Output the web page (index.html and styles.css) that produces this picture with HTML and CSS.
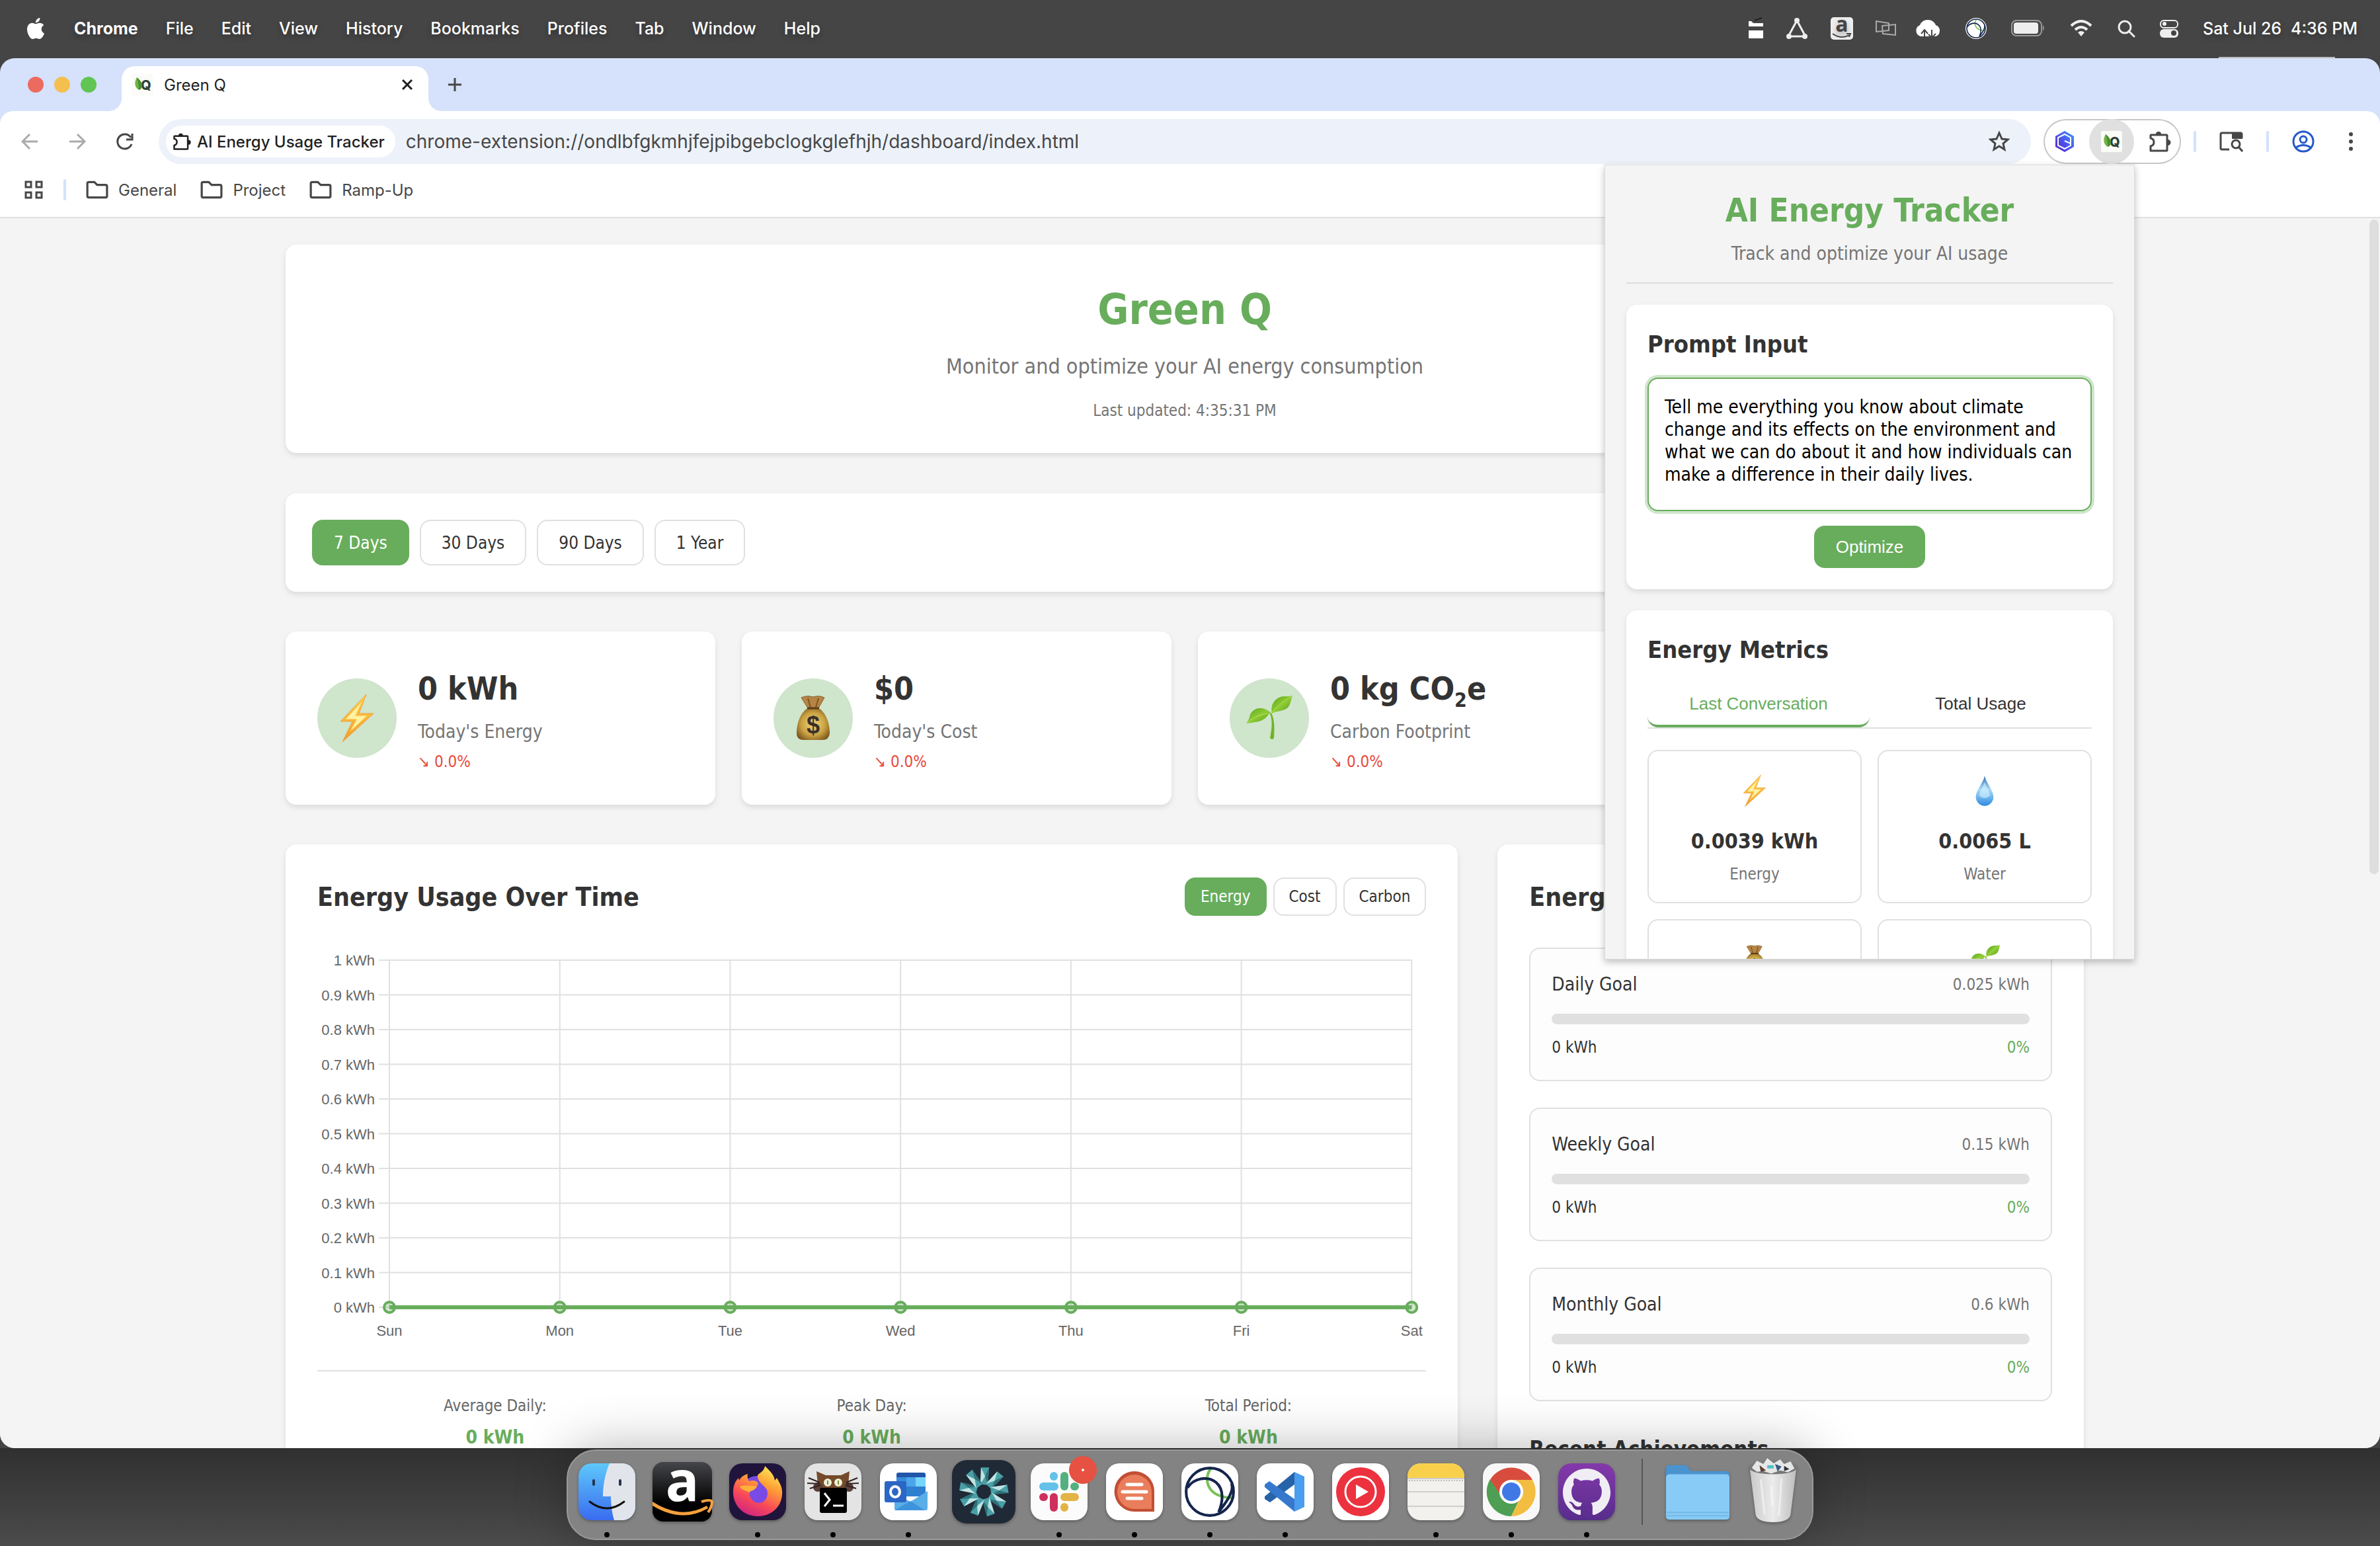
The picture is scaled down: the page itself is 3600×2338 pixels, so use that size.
FILE: index.html
```html
<!DOCTYPE html>
<html lang="en">
  <head>
    <meta charset="UTF-8" />
    <meta name="viewport" content="width=device-width, initial-scale=1.0" />
    <title>Green Q</title>
    <link rel="stylesheet" href="styles.css">
  </head>
  <body>
    <!-- Shared icons -->
    <svg class="defs" aria-hidden="true">
      <defs>
        <linearGradient id="boltFill" x1="0" y1="0" x2="0" y2="1">
          <stop offset="0" stop-color="#ffd34d" />
          <stop offset="1" stop-color="#f39a2c" />
        </linearGradient>
        <radialGradient id="bagFill" cx=".5" cy=".5" r=".6">
          <stop offset="0" stop-color="#f0d878" />
          <stop offset=".6" stop-color="#c9a243" />
          <stop offset="1" stop-color="#7d551c" />
        </radialGradient>
        <linearGradient id="leafFill" x1="0" y1="0" x2="1" y2="1">
          <stop offset="0" stop-color="#55a51c" />
          <stop offset=".5" stop-color="#8fcb35" />
          <stop offset="1" stop-color="#4d9a1a" />
        </linearGradient>
        <linearGradient id="dropFill" x1="0" y1="0" x2="0" y2="1">
          <stop offset="0" stop-color="#2f6fb5" />
          <stop offset=".45" stop-color="#a9dcf8" />
          <stop offset="1" stop-color="#2f8be0" />
        </linearGradient>
        <symbol id="bolt" viewBox="0 0 72 72">
          <path d="M50 0 L11 41 L29 41 L14 72 L61 29 L39 29 Z" fill="url(#boltFill)" stroke="#f0a23c" />
          <path d="M45 9 L18 38 L35 38 L25 57 L52 32 L34 32 Z" fill="#fff2a0" stroke="#fbb93a" />
        </symbol>
        <symbol id="bag" viewBox="0 0 72 72">
          <path d="M18 5 Q27 1 36 4 Q45 1 53 5 L44 21 L28 21 Z" fill="#b58545" stroke="#8a6130" />
          <path d="M28 6 L32 20 M44 6 L40 20" stroke="#805422" stroke-width="2" fill="none" />
          <path d="M28 21 H44 C54 26 61 42 61 59 Q60 69 50 69 H22 Q11 69 11 59 C11 42 18 26 28 21 Z" fill="url(#bagFill)" />
          <path d="M27 21 H45" stroke="#5e3d17" stroke-width="3" />
          <text x="36" y="59" text-anchor="middle" font-family="Liberation Sans" font-size="36" font-weight="700" fill="#3a302b">$</text>
        </symbol>
        <symbol id="sprout" viewBox="0 0 72 72">
          <path d="M39 28 C44 38 44 52 43 66 Q40 70 37 66 C40 52 41 40 37 29 Z" fill="#6db526" />
          <path d="M39 29 C27 16 9 20 6 34 C5 39 3 41 1 44 C14 42 24 42 31 35 C34 31 36 29 39 29 Z" fill="url(#leafFill)" />
          <path d="M40 29 C37 14 46 4 58 3 C64 3 68 3 71 2 C68 9 69 15 63 21 C56 26 45 25 40 29 Z" fill="url(#leafFill)" />
          <path d="M2 43 C14 34 22 29 38 29 M41 27 C48 18 57 10 70 3" stroke="#b7e05f" fill="none" />
        </symbol>
        <symbol id="drop" viewBox="0 0 72 72">
          <path d="M36 2 C33 18 16 34 16 50 A20 20 0 0 0 56 50 C56 34 39 18 36 2 Z" fill="url(#dropFill)" />
          <path d="M36 15 C33 28 24 38 24 47 Q36 58 48 47 C48 38 39 28 36 15 Z" fill="#d8f3ff" opacity=".6" />
        </symbol>
        <symbol id="folder" viewBox="0 0 32 26">
          <path d="M2 4 Q2 2 4 2 H12 L16 6 H28 Q30 6 30 8 V22 Q30 24 28 24 H4 Q2 24 2 22 Z" fill="none" stroke="#474747" stroke-width="3" />
        </symbol>
        <symbol id="puzzle" viewBox="0 0 34 34">
          <path d="M4 7 H27 Q28 7 28 8 V30 Q28 31 27 31 H3 V24 Q8 23 8 18 Q8 13 3 12 V8 Q3 7 4 7 Z" fill="none" stroke="currentColor" stroke-width="3" stroke-linejoin="round" />
          <path d="M11 6 A4 4 0 0 1 19 6 Z M29 14 A4 4 0 0 1 29 23 Z" fill="currentColor" />
        </symbol>
        <symbol id="greenq" viewBox="0 0 32 32">
          <rect width="32" height="32" rx="3" fill="#fbfcf8" />
          <text x="13" y="24" font-family="Inter" font-size="20" font-weight="800" fill="#2d4038">Q</text>
          <path d="M7 5 C3 12 3 20 10 24 C17 22 17 13 7 5 Z" fill="#6fb344" />
          <path d="M7 5 C9 12 10 18 10 24 C17 22 17 13 7 5 Z" fill="#4a9030" />
        </symbol>
        <symbol id="arc" viewBox="0 0 80 80">
          <path d="M42 5 C30 20 34 48 74 49" fill="none" stroke="#7ac259" stroke-width="4" />
          <circle cx="40" cy="40" r="35" fill="none" stroke="#14254d" stroke-width="4" />
          <path d="M7 34 C16 20 36 16 49 26 C62 37 59 56 53 70 C67 52 76 38 72 28" fill="none" stroke="#14254d" stroke-width="4" />
        </symbol>
      </defs>
    </svg>

    <header class="menubar">
      <nav class="menus">
        <svg class="apple" viewBox="0 0 24 24"><path fill="#fff" d="M12.152 6.896c-.948 0-2.415-1.078-3.96-1.040-2.040.027-3.910 1.183-4.961 3.014-2.117 3.675-.546 9.103 1.519 12.090 1.013 1.454 2.208 3.090 3.792 3.039 1.520-.065 2.090-.987 3.935-.987 1.831 0 2.350.987 3.960.948 1.637-.026 2.676-1.480 3.676-2.948 1.156-1.688 1.636-3.325 1.662-3.415-.039-.013-3.182-1.221-3.220-4.857-.026-3.040 2.480-4.494 2.597-4.559-1.429-2.090-3.623-2.324-4.390-2.376-2-.156-3.675 1.090-4.610 1.090zM15.530 3.830c.843-1.012 1.400-2.427 1.245-3.830-1.207.052-2.662.805-3.532 1.818-.780.896-1.454 2.338-1.273 3.714 1.338.104 2.715-.688 3.559-1.701" /></svg>
        <span class="app-name">Chrome</span>
        <span>File</span>
        <span>Edit</span>
        <span>View</span>
        <span>History</span>
        <span>Bookmarks</span>
        <span>Profiles</span>
        <span>Tab</span>
        <span>Window</span>
        <span>Help</span>
      </nav>
      <div class="status">
        <div class="status-apps">
          <svg width="22" height="34" viewBox="0 0 22 34"><path d="M0 6 H4 L7 9 H22 V14 H0 Z M0 20 H22 V32 H0 Z" fill="#fff" /><path d="M9 5 L20 1" stroke="#222" stroke-width="2" /></svg>
          <svg width="34" height="34" viewBox="0 0 34 34"><path d="M17 5 L4 29 H30 Z" fill="none" stroke="#eee" stroke-width="3" /><circle cx="17" cy="5" r="4" fill="#eee" /><circle cx="5" cy="29" r="4" fill="#eee" /><circle cx="29" cy="29" r="4" fill="#eee" /></svg>
          <svg width="34" height="34" viewBox="0 0 34 34"><rect width="34" height="34" rx="5" fill="#eee" /><text x="17" y="22" text-anchor="middle" font-family="Open Sans" font-size="32" font-weight="700" fill="#444">a</text><path d="M3 25 Q16 34 28 27 M24 25 H30 L28 30" stroke="#444" stroke-width="2" fill="none" /></svg>
          <svg width="31" height="24" viewBox="0 0 31 24"><path d="M1 1 L20 4 V15 L1 17 Z M10 8 L30 6 V22 L11 20 Z" fill="none" stroke="#aaa" stroke-width="2" /></svg>
        </div>
        <svg width="40" height="32" viewBox="0 0 40 32"><path d="M9 28 A9 9 0 0 1 8 11 A13 13 0 0 1 32 11 A9 9 0 0 1 32 28 Z" fill="#fff" /><path d="M15 31 V19 M10 24 L15 18 L20 24 M26 18 V31 M21 25 L26 30 L32 24" stroke="#444" stroke-width="2" fill="none" /></svg>
        <svg width="32" height="32" viewBox="0 0 80 80"><circle cx="40" cy="40" r="40" fill="#fff" /><use href="#arc" width="80" height="80" /></svg>
        <svg width="52" height="26" viewBox="0 0 52 26"><rect x="1" y="1" width="45" height="23" rx="7" fill="none" stroke="#999" stroke-width="2" /><rect x="4" y="4" width="37" height="17" rx="4" fill="#eee" /><path d="M48 8 Q52 12 48 17 Z" fill="#999" /></svg>
        <svg width="34" height="26" viewBox="0 0 34 26"><path d="M2 9 Q17 -5 32 9 M8 15 Q17 7 26 15" fill="none" stroke="#eee" stroke-width="4" /><path d="M17 25 L12 19 Q17 15 22 19 Z" fill="#eee" /></svg>
        <svg width="28" height="28" viewBox="0 0 28 28"><circle cx="12" cy="12" r="9" fill="none" stroke="#eee" stroke-width="3" /><path d="M18 18 L26 26" stroke="#eee" stroke-width="3" stroke-linecap="round" /></svg>
        <svg width="28" height="28" viewBox="0 0 28 28"><rect x="1" y="2" width="26" height="11" rx="5" fill="none" stroke="#eee" stroke-width="2" /><circle cx="7" cy="7" r="3" fill="#eee" /><rect x="0" y="15" width="28" height="13" rx="6" fill="#eee" /><circle cx="21" cy="21" r="4" fill="#444" /></svg>
        <span class="clock"><span>Sat Jul 26</span><span>4:36 PM</span></span>
      </div>
    </header>

    <main class="window">
      <div class="tabstrip">
        <div class="lights"><i class="red"></i><i class="yellow"></i><i class="green"></i></div>
        <div class="tab">
          <svg width="32" height="32"><use href="#greenq" /></svg>
          <span>Green Q</span>
          <button class="icon-button tab-close" aria-label="Close tab"><svg width="16" height="16" viewBox="0 0 16 16"><path d="M1 1 L15 15 M15 1 L1 15" stroke="#1f1f1f" stroke-width="3" /></svg></button>
        </div>
        <button class="icon-button" aria-label="New tab"><svg width="20" height="20" viewBox="0 0 20 20"><path d="M10 0 V20 M0 10 H20" stroke="#474747" stroke-width="3" /></svg></button>
      </div>

      <div class="toolbar">
        <div class="nav-buttons">
          <button class="icon-button" aria-label="Back"><svg width="26" height="26" viewBox="0 0 26 26"><path d="M25 13 H3 M13 2 L2 13 L13 24" fill="none" stroke="#aaa" stroke-width="3" /></svg></button>
          <button class="icon-button" aria-label="Forward"><svg width="26" height="26" viewBox="0 0 26 26"><path d="M1 13 H23 M13 2 L24 13 L13 24" fill="none" stroke="#aaa" stroke-width="3" /></svg></button>
          <button class="icon-button" aria-label="Reload"><svg width="26" height="26" viewBox="0 0 26 26"><path d="M22 7 A11 11 0 1 0 23 17" fill="none" stroke="#474747" stroke-width="3" /><path d="M24 1 V10 H15" fill="none" stroke="#474747" stroke-width="3" /></svg></button>
        </div>
        <div class="omnibox">
          <span class="chip"><svg width="28" height="28"><use href="#puzzle" /></svg>AI Energy Usage Tracker</span>
          <input class="url" type="text" aria-label="Address" value="chrome-extension://ondlbfgkmhjfejpibgebclogkglefhjh/dashboard/index.html" />
          <svg width="32" height="32" viewBox="0 0 32 32"><path d="M16 3 L20 12 L29 13 L22 19 L24 28 L16 23 L8 28 L10 19 L3 13 L12 12 Z" fill="none" stroke="#474747" stroke-width="3" /></svg>
        </div>
        <div class="extensions">
          <svg width="30" height="34" viewBox="0 0 30 34">
            <defs><linearGradient id="hex" x1="1" y1="0" x2="0" y2="1"><stop offset="0" stop-color="#3a9df5" /><stop offset=".5" stop-color="#4b57f2" /><stop offset="1" stop-color="#5b1fc0" /></linearGradient></defs>
            <path d="M15 1 L29 9 V25 L15 33 L1 25 V9 Z" fill="url(#hex)" />
            <path d="M24 20 V23 L15 28 L5 23 V11 L15 6 L24 11 V20 L15 16" fill="none" stroke="#fff" stroke-width="2" />
          </svg>
          <span class="ext-active"><svg width="32" height="32"><use href="#greenq" /></svg></span>
          <svg width="34" height="34"><use href="#puzzle" /></svg>
        </div>
        <div class="right-tools">
          <i class="divider"></i>
          <svg width="36" height="32" viewBox="0 0 36 32"><path d="M15 28 H4 Q2 28 2 26 V5 Q2 3 4 3 H32 Q34 3 34 5 V11" fill="none" stroke="#474747" stroke-width="3" /><path d="M19 3 H35 V12 H19 Z" fill="#474747" /><circle cx="25" cy="20" r="6" fill="none" stroke="#474747" stroke-width="3" /><path d="M29 24 L35 31" stroke="#474747" stroke-width="3" /></svg>
          <i class="divider"></i>
          <svg width="34" height="34" viewBox="0 0 34 34"><circle cx="17" cy="17" r="15" fill="none" stroke="#2558c9" stroke-width="3" /><circle cx="17" cy="14" r="5" fill="none" stroke="#2558c9" stroke-width="3" /><path d="M6 26 Q17 19 28 26" fill="none" stroke="#2558c9" stroke-width="3" /></svg>
          <svg class="kebab" width="8" height="30" viewBox="0 0 8 30"><circle cx="4" cy="4" r="3" fill="#474747" /><circle cx="4" cy="15" r="3" fill="#474747" /><circle cx="4" cy="26" r="3" fill="#474747" /></svg>
        </div>
      </div>

      <div class="bookmarks">
        <svg width="30" height="30" viewBox="0 0 30 30"><path d="M3 3 H11 V11 H3 Z M19 3 H27 V11 H19 Z M3 19 H11 V27 H3 Z M19 19 H27 V27 H19 Z" fill="none" stroke="#474747" stroke-width="3" /></svg>
        <i class="divider"></i>
        <a href="#general"><svg width="34" height="28"><use href="#folder" /></svg>General</a>
        <a href="#project"><svg width="34" height="28"><use href="#folder" /></svg>Project</a>
        <a href="#ramp-up"><svg width="34" height="28"><use href="#folder" /></svg>Ramp-Up</a>
      </div>

      <div class="viewport">
        <div class="dashboard">
          <section class="card page-header">
            <h1>Green Q</h1>
            <p class="subtitle">Monitor and optimize your AI energy consumption</p>
            <p class="last-updated">Last updated: 4:35:31 PM</p>
          </section>

          <section class="card filters">
            <button class="btn active">7 Days</button>
            <button class="btn">30 Days</button>
            <button class="btn">90 Days</button>
            <button class="btn">1 Year</button>
          </section>

          <section class="summary">
            <div class="card summary-card">
              <span class="summary-icon"><svg><use href="#bolt" /></svg></span>
              <div class="summary-info">
                <h3>0 kWh</h3>
                <p>Today's Energy</p>
                <span class="trend">↘ 0.0%</span>
              </div>
            </div>
            <div class="card summary-card">
              <span class="summary-icon"><svg><use href="#bag" /></svg></span>
              <div class="summary-info">
                <h3>$0</h3>
                <p>Today's Cost</p>
                <span class="trend">↘ 0.0%</span>
              </div>
            </div>
            <div class="card summary-card">
              <span class="summary-icon"><svg><use href="#sprout" /></svg></span>
              <div class="summary-info">
                <h3>0 kg CO<sub>2</sub>e</h3>
                <p>Carbon Footprint</p>
                <span class="trend">↘ 0.0%</span>
              </div>
            </div>
            <div class="card summary-card"></div>
          </section>

          <section class="columns">
            <div class="card chart-card">
              <div class="card-head">
                <h2>Energy Usage Over Time</h2>
                <div class="chart-controls">
                  <button class="btn small active">Energy</button>
                  <button class="btn small">Cost</button>
                  <button class="btn small">Carbon</button>
                </div>
              </div>

              <div class="chart">
                <svg class="plot">
                  <g class="grid-lines">
                    <line x1="0" x2="0" y1="0" y2="100%" />
                    <line x1="16.667%" x2="16.667%" y1="0" y2="100%" />
                    <line x1="33.333%" x2="33.333%" y1="0" y2="100%" />
                    <line x1="50%" x2="50%" y1="0" y2="100%" />
                    <line x1="66.667%" x2="66.667%" y1="0" y2="100%" />
                    <line x1="83.333%" x2="83.333%" y1="0" y2="100%" />
                    <line x1="100%" x2="100%" y1="0" y2="100%" />
                    <line x1="-16" x2="100%" y1="0" y2="0" />
                    <line x1="-16" x2="100%" y1="10%" y2="10%" />
                    <line x1="-16" x2="100%" y1="20%" y2="20%" />
                    <line x1="-16" x2="100%" y1="30%" y2="30%" />
                    <line x1="-16" x2="100%" y1="40%" y2="40%" />
                    <line x1="-16" x2="100%" y1="50%" y2="50%" />
                    <line x1="-16" x2="100%" y1="60%" y2="60%" />
                    <line x1="-16" x2="100%" y1="70%" y2="70%" />
                    <line x1="-16" x2="100%" y1="80%" y2="80%" />
                    <line x1="-16" x2="100%" y1="90%" y2="90%" />
                    <line x1="-16" x2="100%" y1="100%" y2="100%" />
                  </g>
                  <g class="y-labels">
                    <text x="-22" y="0" dy="8">1 kWh</text>
                    <text x="-22" y="10%" dy="8">0.9 kWh</text>
                    <text x="-22" y="20%" dy="8">0.8 kWh</text>
                    <text x="-22" y="30%" dy="8">0.7 kWh</text>
                    <text x="-22" y="40%" dy="8">0.6 kWh</text>
                    <text x="-22" y="50%" dy="8">0.5 kWh</text>
                    <text x="-22" y="60%" dy="8">0.4 kWh</text>
                    <text x="-22" y="70%" dy="8">0.3 kWh</text>
                    <text x="-22" y="80%" dy="8">0.2 kWh</text>
                    <text x="-22" y="90%" dy="8">0.1 kWh</text>
                    <text x="-22" y="100%" dy="8">0 kWh</text>
                  </g>
                  <g class="x-labels">
                    <text x="0" y="100%" dy="43">Sun</text>
                    <text x="16.667%" y="100%" dy="43">Mon</text>
                    <text x="33.333%" y="100%" dy="43">Tue</text>
                    <text x="50%" y="100%" dy="43">Wed</text>
                    <text x="66.667%" y="100%" dy="43">Thu</text>
                    <text x="83.333%" y="100%" dy="43">Fri</text>
                    <text x="100%" y="100%" dy="43">Sat</text>
                  </g>
                  <g class="series">
                    <line x1="0" x2="100%" y1="100%" y2="100%" />
                    <circle cx="0" cy="100%" r="8" />
                    <circle cx="16.667%" cy="100%" r="8" />
                    <circle cx="33.333%" cy="100%" r="8" />
                    <circle cx="50%" cy="100%" r="8" />
                    <circle cx="66.667%" cy="100%" r="8" />
                    <circle cx="83.333%" cy="100%" r="8" />
                    <circle cx="100%" cy="100%" r="8" />
                  </g>
                </svg>
              </div>

              <div class="chart-stats">
                <div><span>Average Daily:</span><strong>0 kWh</strong></div>
                <div><span>Peak Day:</span><strong>0 kWh</strong></div>
                <div><span>Total Period:</span><strong>0 kWh</strong></div>
              </div>
            </div>

            <div class="card goals-card">
              <div class="card-head"><h2>Energy Goals</h2></div>
              <div class="goals">
                <div class="goal">
                  <div class="goal-row"><span class="goal-name">Daily Goal</span><span class="goal-target">0.025 kWh</span></div>
                  <div class="progress"></div>
                  <div class="goal-row result"><span>0 kWh</span><span class="percent">0%</span></div>
                </div>
                <div class="goal">
                  <div class="goal-row"><span class="goal-name">Weekly Goal</span><span class="goal-target">0.15 kWh</span></div>
                  <div class="progress"></div>
                  <div class="goal-row result"><span>0 kWh</span><span class="percent">0%</span></div>
                </div>
                <div class="goal">
                  <div class="goal-row"><span class="goal-name">Monthly Goal</span><span class="goal-target">0.6 kWh</span></div>
                  <div class="progress"></div>
                  <div class="goal-row result"><span>0 kWh</span><span class="percent">0%</span></div>
                </div>
              </div>
              <h3 class="achievements">Recent Achievements</h3>
            </div>
          </section>
        </div>
        <div class="scrollbar"><div class="thumb"></div></div>
      </div>

      <!-- Extension popup -->
      <aside class="popup">
        <div class="popup-header">
          <h1>AI Energy Tracker</h1>
          <p>Track and optimize your AI usage</p>
        </div>
        <section class="card popup-card">
          <h2><label for="prompt">Prompt Input</label></h2>
          <textarea id="prompt">Tell me everything you know about climate change and its effects on the environment and what we can do about it and how individuals can make a difference in their daily lives.</textarea>
          <button class="optimize">Optimize</button>
        </section>
        <section class="card popup-card">
          <h2>Energy Metrics</h2>
          <div class="tabs">
            <button class="active">Last Conversation</button>
            <button>Total Usage</button>
          </div>
          <div class="metrics">
            <div class="metric"><svg><use href="#bolt" /></svg><strong>0.0039 kWh</strong><span>Energy</span></div>
            <div class="metric"><svg><use href="#drop" /></svg><strong>0.0065 L</strong><span>Water</span></div>
            <div class="metric"><svg><use href="#bag" /></svg></div>
            <div class="metric"><svg><use href="#sprout" /></svg></div>
          </div>
        </section>
      </aside>
    </main>

    <footer class="dock-area">
      <div class="dock">
        <div class="dock-item running">
          <svg viewBox="0 0 86 86">
            <defs>
              <linearGradient id="finder" x1="0" y1="0" x2="0" y2="1"><stop offset="0" stop-color="#5ec8fa" /><stop offset="1" stop-color="#3a6cf0" /></linearGradient>
              <clipPath id="tile"><rect width="86" height="86" rx="20" /></clipPath>
            </defs>
            <g clip-path="url(#tile)">
              <rect width="86" height="86" fill="url(#finder)" />
              <path d="M47 0 C40 16 37 34 37 50 H49 C49 64 51 76 54 86 H86 V0 Z" fill="#e1e5eb" />
            </g>
            <path d="M23 26 V32 M63 26 V32" stroke="#24354d" stroke-width="4" stroke-linecap="round" />
            <path d="M17 58 Q43 78 69 58" fill="none" stroke="#111" stroke-width="3" stroke-linecap="round" />
          </svg>
        </div>
        <div class="dock-item">
          <svg class="large" viewBox="0 0 90 90">
            <defs><linearGradient id="black" x1="0" y1="0" x2="0" y2="1"><stop offset="0" stop-color="#45464a" /><stop offset=".7" stop-color="#000" /></linearGradient></defs>
            <rect width="90" height="90" rx="16" fill="url(#black)" />
            <text x="45" y="59" text-anchor="middle" font-family="Open Sans" font-size="84" font-weight="700" fill="#fff">a</text>
            <path d="M0 60 Q44 88 82 66 L84 70 Q44 93 0 66 Z" fill="#f7a13c" />
            <path d="M74 60 Q88 56 90 60 Q90 68 84 76" fill="none" stroke="#f7a13c" stroke-width="4" />
          </svg>
        </div>
        <div class="dock-item running">
          <svg viewBox="0 0 86 86">
            <defs>
              <linearGradient id="fox" x1=".8" y1="0" x2=".3" y2="1"><stop offset="0" stop-color="#fff05a" /><stop offset=".35" stop-color="#ffa035" /><stop offset=".7" stop-color="#f8485a" /><stop offset="1" stop-color="#cf2482" /></linearGradient>
            </defs>
            <rect width="86" height="86" rx="20" fill="#20143c" />
            <circle cx="42" cy="44" r="25" fill="#7a4ae6" />
            <path d="M54 4 C64 14 68 18 69 26 L72 22 C78 32 81 38 80 48 C78 68 62 80 43 80 C22 80 6 64 6 44 C6 34 9 27 14 22 L15 26 C18 20 22 18 28 16 C27 20 28 24 30 27 C37 25 41 26 44 30 L42 35 L35 40 C27 40 30 58 44 60 C56 60 60 48 57 40 C52 32 42 28 43 18 C46 14 53 12 54 4 Z" fill="url(#fox)" />
            <path d="M16 35 C22 32 32 34 42 35 C38 42 34 40 30 44 C26 40 19 42 16 35 Z" fill="#ffb038" />
          </svg>
        </div>
        <div class="dock-item running">
          <svg viewBox="0 0 86 86">
            <rect width="86" height="86" rx="20" fill="#e4e4e4" />
            <path d="M18 12 L32 18 H55 L68 12 L66 32 Q62 42 43 42 Q24 42 20 32 Z" fill="#744a2a" />
            <circle cx="20" cy="36" r="7" fill="#5a4038" /><circle cx="67" cy="36" r="7" fill="#5a4038" />
            <circle cx="35" cy="29" r="6" fill="#eef0d8" /><circle cx="51" cy="29" r="6" fill="#eef0d8" />
            <path d="M35 26 V32 M51 26 V32" stroke="#7b8b30" stroke-width="2" />
            <path d="M23 29 L6 22 M23 31 L4 30 M24 33 L8 38 M63 29 L80 22 M63 31 L82 30 M62 33 L78 38" stroke="#322" stroke-width="2" />
            <rect x="23" y="37" width="41" height="38" rx="3" fill="#000" />
            <path d="M30 45 L38 55 L30 65 M43 64 H59" fill="none" stroke="#fff" stroke-width="3" />
          </svg>
        </div>
        <div class="dock-item running">
          <svg viewBox="0 0 86 86">
            <rect width="86" height="86" rx="20" fill="#fff" />
            <rect x="25" y="14" width="44" height="32" rx="3" fill="#2156a8" />
            <path d="M25 21 H40 V35 H25 Z" fill="#368bdc" /><path d="M40 21 H54 V35 H40 Z" fill="#4aa5ea" /><path d="M54 21 H69 V35 H54 Z" fill="#76d5fb" />
            <path d="M25 35 H69 V50 H25 Z" fill="#2f7fd0" />
            <path d="M22 46 L46 58 L72 42 V68 Q72 71 69 71 H25 Q22 71 22 68 Z" fill="#5aaee8" />
            <path d="M46 57 L22 71 H68 Z" fill="#3d94dc" />
            <rect x="7" y="27" width="33" height="32" rx="3" fill="#2c66c4" />
            <ellipse cx="23" cy="43" rx="7" ry="8" fill="none" stroke="#fff" stroke-width="4" />
          </svg>
        </div>
        <div class="dock-item">
          <svg class="larger" viewBox="0 0 94 94">
            <defs>
              <g id="blade"><path d="M42 36 L43 11 L55 11 L53 37 Z" fill="#4a9fa6" /><path d="M42 36 L43 11 L49 24 Z" fill="#bfe4e2" /><path d="M53 37 L55 11 L49 24 Z" fill="#2e7178" /></g>
            </defs>
            <rect width="94" height="94" rx="22" fill="#202a36" />
            <use href="#blade" />
            <use href="#blade" transform="rotate(40 47 47)" />
            <use href="#blade" transform="rotate(80 47 47)" />
            <use href="#blade" transform="rotate(120 47 47)" />
            <use href="#blade" transform="rotate(160 47 47)" />
            <use href="#blade" transform="rotate(200 47 47)" />
            <use href="#blade" transform="rotate(240 47 47)" />
            <use href="#blade" transform="rotate(280 47 47)" />
            <use href="#blade" transform="rotate(320 47 47)" />
          </svg>
        </div>
        <div class="dock-item running">
          <svg viewBox="0 0 86 86">
            <rect width="86" height="86" rx="20" fill="#fbfbfc" />
            <g stroke-width="12" stroke-linecap="round">
              <path d="M19 35 H36" stroke="#63c1ea" /><path d="M35 19 V20" stroke="#63c1ea" />
              <path d="M51 19 V35" stroke="#54b07e" /><path d="M67 35 H66" stroke="#54b07e" />
              <path d="M35 51 V67" stroke="#cf2f5c" /><path d="M19 51 H20" stroke="#cf2f5c" />
              <path d="M51 51 H67" stroke="#e4b345" /><path d="M51 66 V67" stroke="#e4b345" />
            </g>
          </svg>
          <span class="badge"></span>
        </div>
        <div class="dock-item running">
          <svg viewBox="0 0 86 86">
            <rect width="86" height="86" rx="20" fill="#fff" />
            <path d="M43 12 A30 30 0 0 1 73 42 V73 H43 A30 30 0 0 1 43 12 Z" fill="#c24f34" />
            <path d="M43 17 A26 26 0 0 1 69 43 V69 H43 A26 26 0 0 1 43 17 Z" fill="#e97d5c" />
            <path d="M32 32 H54 M25 43 H61 M32 53 H54" stroke="#fff" stroke-width="5" stroke-linecap="round" />
          </svg>
        </div>
        <div class="dock-item running">
          <svg viewBox="0 0 86 86"><rect width="86" height="86" rx="20" fill="#fff" /><use href="#arc" x="2" y="2" width="82" height="82" /></svg>
        </div>
        <div class="dock-item running">
          <svg viewBox="0 0 86 86">
            <rect width="86" height="86" rx="20" fill="#fff" />
            <path d="M57 13 L72 20 V66 L57 73 Z" fill="#4b9ded" />
            <path d="M57 13 V32 L20 59 L12 54 V50 Z" fill="#2763a8" />
            <path d="M57 73 V54 L19 27 L12 32 V36 Z" fill="#3578cc" />
          </svg>
        </div>
        <div class="dock-item">
          <svg viewBox="0 0 86 86">
            <rect width="86" height="86" rx="20" fill="#fff" />
            <circle cx="43" cy="43" r="37" fill="#ec323e" />
            <circle cx="43" cy="43" r="23" fill="none" stroke="#fff" stroke-width="3" />
            <path d="M36 32 L55 43 L36 54 Z" fill="#fff" />
          </svg>
        </div>
        <div class="dock-item running">
          <svg viewBox="0 0 86 86">
            <g clip-path="url(#tile)">
              <rect width="86" height="86" fill="#f2f1ed" />
              <rect width="86" height="22" fill="#f9d04c" />
              <path d="M0 23 H86 M0 43 H86 M0 65 H86" stroke="#cfcfcf" stroke-width="2" />
              <path d="M2 26 H86" stroke="#bbb" stroke-width="2" stroke-dasharray="2 2" />
            </g>
          </svg>
        </div>
        <div class="dock-item running">
          <svg viewBox="0 0 86 86">
            <rect width="86" height="86" rx="20" fill="#f8f8f8" />
            <path d="M29 51 L11 24 A37 37 0 0 0 43 80 L57 51 Z" fill="#4e9f53" />
            <path d="M43 25 H75 A37 37 0 0 1 43 80 L57 51 Z" fill="#f3bd42" />
            <path d="M11 25 A37 37 0 0 1 75 25 H43 L29 51 Z" fill="#d84c3e" />
            <circle cx="43" cy="43" r="18" fill="#fff" /><circle cx="43" cy="43" r="14" fill="#4079e6" />
          </svg>
        </div>
        <div class="dock-item running">
          <svg viewBox="0 0 86 86">
            <defs><linearGradient id="purple" x1="0" y1="0" x2="0" y2="1"><stop offset="0" stop-color="#8439aa" /><stop offset="1" stop-color="#572d8c" /></linearGradient></defs>
            <rect width="86" height="86" rx="20" fill="url(#purple)" />
            <path transform="translate(7 7) scale(3)" fill="#f0eef4" d="M12 .297c-6.630 0-12 5.373-12 12 0 5.303 3.438 9.800 8.205 11.385.600.113.820-.258.820-.577 0-.285-.010-1.040-.015-2.040-3.338.724-4.042-1.610-4.042-1.610C4.422 18.070 3.633 17.700 3.633 17.700c-1.087-.744.084-.729.084-.729 1.205.084 1.838 1.236 1.838 1.236 1.070 1.835 2.809 1.305 3.495.998.108-.776.417-1.305.760-1.605-2.665-.300-5.466-1.332-5.466-5.930 0-1.310.465-2.380 1.235-3.220-.135-.303-.540-1.523.105-3.176 0 0 1.005-.322 3.300 1.230.960-.267 1.980-.399 3-.405 1.020.006 2.040.138 3 .405 2.280-1.552 3.285-1.230 3.285-1.230.645 1.653.240 2.873.120 3.176.765.840 1.230 1.910 1.230 3.220 0 4.610-2.805 5.625-5.475 5.920.420.360.810 1.096.810 2.220 0 1.606-.015 2.896-.015 3.286 0 .315.210.690.825.570C20.565 22.092 24 17.592 24 12.297c0-6.627-5.373-12-12-12" />
          </svg>
        </div>
        <i class="dock-divider"></i>
        <div class="dock-item">
          <svg class="larger" viewBox="0 0 98 98">
            <path d="M0 14 Q0 8 6 8 H28 Q32 8 36 14 L40 17 H92 Q98 17 98 23 V50 H0 Z" fill="#4b93cf" />
            <rect y="22" width="98" height="70" rx="5" fill="#87cbf6" />
            <path d="M1 81 H97 M1 86 H97" stroke="#74b8e6" stroke-width="2" />
          </svg>
        </div>
        <div class="dock-item">
          <svg class="larger" viewBox="0 0 98 98">
            <defs><linearGradient id="can" x1="0" y1="0" x2="1" y2="0"><stop offset="0" stop-color="#c9c9c9" /><stop offset=".5" stop-color="#ececec" /><stop offset="1" stop-color="#bdbdbd" /></linearGradient></defs>
            <path d="M13 12 L22 84 Q24 96 49 96 Q74 96 76 84 L85 12 Q49 24 13 12 Z" fill="url(#can)" />
            <ellipse cx="49" cy="12" rx="37" ry="10" fill="#777" />
            <path d="M16 12 L24 1 L34 6 L40 -3 L50 5 L60 -1 L66 6 L76 2 L82 13 L72 19 L60 16 L46 21 L34 17 L24 18 Z" fill="#e6e6e6" />
            <path d="M28 8 L38 16 L30 18 Z" fill="#5a3a30" /><path d="M52 6 L62 10 L56 18 Z" fill="#345a80" /><path d="M40 8 H50 V13 H40 Z" fill="#4fc2c8" /><path d="M66 9 L74 14 L66 17 Z" fill="#30323a" />
            <path d="M30 30 L36 84 M62 28 L58 86 M46 40 L48 70" stroke="#fff" stroke-width="3" opacity=".5" />
          </svg>
        </div>
      </div>
    </footer>
  </body>
</html>
```
FILE: styles.css
```css
:root {
  --green: #68ad5c;
  --green-light: #cfe5cc;
  --text: #333;
  --muted: #757575;
  --border: #e0e0e0;
  --page: #f4f4f4;
  --radius: 16px;
}
* {
  box-sizing: border-box;
}
body {
  margin: 0;
  height: 100vh;
  overflow: hidden;
  display: flex;
  flex-direction: column;
  background-color: #444;
  color: var(--text);
  font-family: "DejaVu Sans Condensed", "DejaVu Sans", sans-serif;
}
h1,
h2,
h3,
p {
  margin: 0;
}
button,
input,
textarea {
  font-family: inherit;
}
svg {
  flex-shrink: 0;
}
.defs {
  position: absolute;
  width: 0;
  height: 0;
}

/* Menu bar */
.menubar {
  height: 88px;
  flex-shrink: 0;
  display: flex;
  justify-content: space-between;
  align-items: center;
  padding: 0 34px 2px 38px;
  background-color: #454545;
  color: #fff;
  font-family: Inter, sans-serif;
  font-size: 25px;
  font-weight: 500;
  text-shadow: 0 4px 8px rgba(0, 0, 0, 0.3);
}
.menus {
  display: flex;
  align-items: center;
  gap: 42px;
}
.apple {
  width: 32px;
  height: 32px;
}
.app-name {
  font-weight: 700;
}
.status {
  display: flex;
  align-items: center;
  gap: 37px;
}
.status-apps {
  display: flex;
  align-items: center;
  gap: 34px;
  margin-right: -9px;
}
.clock {
  position: relative;
  display: flex;
  gap: 14px;
}
.clock::after {
  content: "";
  position: absolute;
  bottom: -30px;
  left: 24px;
  right: 34px;
  height: 2px;
  background-color: #bbb;
}

/* Browser window */
.window {
  flex: 1;
  min-height: 0;
  position: relative;
  display: flex;
  flex-direction: column;
  overflow: hidden;
  background-color: #d6e1fb;
  border-radius: 22px;
  font-size: 24px;
}
.icon-button {
  display: flex;
  padding: 0;
  border: none;
  background: none;
}
.divider {
  width: 4px;
  height: 32px;
  border-radius: 2px;
  background-color: #d3e1fb;
}
.tabstrip {
  height: 80px;
  flex-shrink: 0;
  display: flex;
  align-items: center;
  padding-left: 42px;
  font-family: Inter, sans-serif;
}
.lights {
  display: flex;
  gap: 16px;
  width: 142px;
}
.lights i {
  width: 24px;
  height: 24px;
  border-radius: 50%;
}
.lights .red {
  background-color: #ed6a5e;
}
.lights .yellow {
  background-color: #f5bf4f;
}
.lights .green {
  background-color: #61c554;
}
.tab {
  position: relative;
  align-self: flex-end;
  display: flex;
  align-items: center;
  gap: 16px;
  width: 464px;
  height: 68px;
  margin-right: 30px;
  padding: 0 24px 12px 16px;
  background-color: #fff;
  border-radius: 20px 20px 0 0;
  color: #1f1f1f;
}
.tab::before,
.tab::after {
  content: "";
  position: absolute;
  bottom: 0;
  width: 20px;
  height: 20px;
}
.tab::before {
  left: -20px;
  background: radial-gradient(circle at 0 0, transparent 20px, #fff 20px);
}
.tab::after {
  right: -20px;
  background: radial-gradient(circle at 100% 0, transparent 20px, #fff 20px);
}
.tab-close {
  margin-left: auto;
}
.toolbar {
  height: 92px;
  flex-shrink: 0;
  display: flex;
  align-items: center;
  gap: 19px;
  padding: 0 40px 0 32px;
  background-color: #fff;
  border-radius: 20px 20px 0 0;
  font-family: Inter, sans-serif;
}
.nav-buttons {
  display: flex;
  gap: 46px;
  margin-right: 19px;
}
.omnibox {
  flex: 1;
  display: flex;
  align-items: center;
  height: 68px;
  padding: 0 32px 0 11px;
  border-radius: 34px;
  background-color: #edf2fa;
}
.chip {
  display: flex;
  align-items: center;
  gap: 9px;
  height: 48px;
  padding: 0 16px 0 10px;
  border-radius: 24px;
  background-color: #fff;
  color: #1f1f1f;
  font-weight: 500;
}
.url {
  flex: 1;
  padding: 0 16px;
  border: none;
  background: none;
  color: #474747;
  font-size: 28px;
}
.extensions {
  display: flex;
  align-items: center;
  gap: 22px;
  height: 68px;
  padding: 0 15px 0 17px;
  border-radius: 34px;
  box-shadow: inset 0 0 0 2px #c7c7c7;
  color: #474747;
}
.ext-active {
  display: grid;
  place-items: center;
  width: 68px;
  height: 68px;
  border-radius: 50%;
  background-color: #e0e0e0;
}
.right-tools {
  display: flex;
  align-items: center;
  gap: 35px;
}
.kebab {
  margin-left: 16px;
}
.bookmarks {
  height: 70px;
  flex-shrink: 0;
  display: flex;
  align-items: center;
  gap: 36px;
  padding: 0 36px 14px;
  background-color: #fff;
  border-bottom: 2px solid var(--border);
  font-family: Inter, sans-serif;
}
.bookmarks .divider {
  margin: 0 -6px;
}
.bookmarks a {
  display: flex;
  align-items: center;
  gap: 15px;
  color: #474747;
  text-decoration: none;
}

/* Dashboard */
.viewport {
  flex: 1;
  min-height: 0;
  display: flex;
  overflow: hidden;
  background-color: var(--page);
}
.dashboard {
  flex: 1;
  max-width: 2800px;
  margin: 0 auto;
  padding: 40px;
}
.scrollbar {
  width: 16px;
  padding-top: 2px;
}
.thumb {
  width: 14px;
  height: 990px;
  border-radius: 8px;
  background-color: #dedede;
}
.card {
  background-color: #fff;
  border-radius: var(--radius);
  box-shadow: 0 4px 8px rgba(0, 0, 0, 0.1);
}
.page-header {
  display: flex;
  flex-direction: column;
  align-items: center;
  padding: 50px 48px 44px;
  margin-bottom: 61px;
}
.page-header h1 {
  color: var(--green);
  font-size: 64px;
  line-height: 96px;
}
.subtitle {
  margin-top: 14px;
  color: var(--muted);
  font-size: 32px;
  line-height: 48px;
}
.last-updated {
  margin-top: 23px;
  color: var(--muted);
  font-size: 24px;
  line-height: 40px;
}
.filters {
  display: flex;
  gap: 16px;
  padding: 40px;
  margin-bottom: 60px;
}
.btn {
  height: 69px;
  padding: 0 31px;
  border: 2px solid var(--border);
  border-radius: var(--radius);
  background-color: #fff;
  color: var(--text);
  font-size: 26px;
}
.btn.active {
  background-color: var(--green);
  border-color: var(--green);
  color: #fff;
}
.btn.small {
  height: 58px;
  padding: 0 22px;
  font-size: 24px;
}
.summary {
  display: grid;
  grid-template-columns: repeat(4, 1fr);
  gap: 40px;
  margin-bottom: 60px;
}
.summary-card {
  display: flex;
  align-items: center;
  gap: 32px;
  padding: 48px;
}
.summary-icon {
  display: grid;
  place-items: center;
  width: 120px;
  height: 120px;
  border-radius: 50%;
  background-color: var(--green-light);
}
.summary-icon svg {
  width: 72px;
  height: 72px;
}
.summary-info {
  display: flex;
  flex-direction: column;
  gap: 10px;
}
.summary-info h3 {
  font-size: 48px;
  line-height: 76px;
}
.summary-info sub {
  font-size: 30px;
  line-height: 0;
}
.summary-info p {
  color: var(--muted);
  font-size: 28px;
  line-height: 36px;
}
.trend {
  color: #e74c3c;
  font-size: 24px;
  line-height: 34px;
}
.columns {
  display: grid;
  grid-template-columns: 2fr 1fr;
  gap: 60px;
}
.chart-card,
.goals-card {
  padding: 50px 48px;
}
.card-head {
  display: flex;
  justify-content: space-between;
  align-items: center;
  height: 58px;
}
.card-head h2 {
  font-size: 39px;
}
.chart-controls {
  display: flex;
  gap: 10px;
}
.chart {
  display: flex;
  padding: 67px 22px 95px 109px;
  border-bottom: 2px solid var(--border);
}
.plot {
  flex: 1;
  height: 525px;
  overflow: visible;
  font-family: "Liberation Sans", Arial, sans-serif;
  font-size: 22px;
}
.grid-lines {
  stroke: var(--border);
  stroke-width: 2px;
}
.y-labels {
  fill: #666;
  text-anchor: end;
}
.x-labels {
  fill: #666;
  text-anchor: middle;
}
.series {
  stroke: var(--green);
  stroke-width: 6px;
}
.series circle {
  fill: rgba(104, 173, 92, 0.3);
  stroke-width: 4px;
}
.chart-stats {
  display: grid;
  grid-template-columns: repeat(3, 1fr);
  gap: 32px;
  padding-top: 36px;
  text-align: center;
}
.chart-stats div {
  display: flex;
  flex-direction: column;
  gap: 14px;
}
.chart-stats span {
  color: #666;
  font-size: 24px;
  line-height: 32px;
}
.chart-stats strong {
  color: var(--green);
  font-size: 28px;
  line-height: 36px;
}
.goals {
  display: flex;
  flex-direction: column;
  gap: 40px;
  margin: 48px 0;
}
.goal {
  padding: 32px;
  border: 2px solid var(--border);
  border-radius: var(--radius);
  background-color: #fdfdfd;
}
.goal-row {
  display: flex;
  justify-content: space-between;
  align-items: center;
  font-size: 24px;
  line-height: 44px;
}
.goal-row.result {
  line-height: 34px;
}
.goal-name {
  font-size: 28px;
}
.goal-target {
  color: var(--muted);
}
.percent {
  color: var(--green);
}
.progress {
  height: 16px;
  margin: 22px 0 18px;
  border-radius: 8px;
  background-color: var(--border);
}
.achievements {
  font-size: 33px;
  line-height: 50px;
}

/* Popup */
.popup {
  position: absolute;
  top: 161px;
  right: 371px;
  width: 802px;
  height: 1202px;
  overflow: hidden;
  padding: 32px;
  border: 1px solid #ddd;
  background-color: var(--page);
  box-shadow: 0 4px 10px rgba(0, 0, 0, 0.25);
}
.popup-header {
  padding-bottom: 23px;
  border-bottom: 2px solid #ddd;
  text-align: center;
}
.popup-header h1 {
  color: var(--green);
  font-size: 49px;
  line-height: 74px;
}
.popup-header p {
  margin-top: 8px;
  color: var(--muted);
  font-size: 28px;
  line-height: 40px;
}
.popup-card {
  display: flex;
  flex-direction: column;
  gap: 22px;
  margin-top: 32px;
  padding: 32px;
}
.popup-card h2 {
  font-size: 36px;
  line-height: 56px;
}
.popup-card textarea {
  height: 202px;
  padding: 26px 24px;
  border: 2px solid var(--green);
  border-radius: var(--radius);
  outline: none;
  resize: none;
  box-shadow: 0 0 0 4px var(--green-light);
  color: #000;
  font-size: 28px;
  line-height: 34px;
}
.optimize {
  align-self: center;
  height: 64px;
  padding: 0 33px;
  border: none;
  border-radius: var(--radius);
  background-color: var(--green);
  color: #fff;
  font-family: "Liberation Sans", Arial, sans-serif;
  font-size: 26px;
}
.tabs {
  display: flex;
  border-bottom: 2px solid var(--border);
}
.tabs button {
  flex: 1;
  height: 67px;
  padding: 0;
  border: none;
  border-bottom: 4px solid transparent;
  border-radius: var(--radius);
  background: none;
  color: var(--text);
  font-family: "Liberation Sans", Arial, sans-serif;
  font-size: 26px;
}
.tabs .active {
  border-bottom-color: var(--green);
  color: var(--green);
}
.metrics {
  display: grid;
  grid-template-columns: 1fr 1fr;
  gap: 24px;
  padding-top: 10px;
}
.metric {
  display: flex;
  flex-direction: column;
  align-items: center;
  height: 232px;
  padding: 28px;
  border: 2px solid var(--border);
  border-radius: var(--radius);
}
.metric svg {
  width: 48px;
  height: 48px;
  margin: 8px 0 32px;
}
.metric strong {
  font-size: 32px;
  line-height: 40px;
}
.metric span {
  margin-top: 14px;
  color: var(--muted);
  font-size: 24px;
  line-height: 32px;
}

/* Dock */
.dock-area {
  position: relative;
  flex-shrink: 0;
  display: flex;
  justify-content: center;
  align-items: flex-start;
  height: 148px;
  padding-top: 2px;
  background: linear-gradient(#303030, #4b4b4b);
}
.dock {
  display: flex;
  align-items: center;
  height: 137px;
  padding: 0 2px 10px;
  border: 2px solid #9a9a9a;
  border-radius: 44px;
  background-color: #838383;
  box-shadow: 0 0 80px rgba(0, 0, 0, 0.3);
}
.dock-item {
  position: relative;
  display: grid;
  place-items: center;
  width: 114px;
  height: 120px;
}
.dock-item svg {
  width: 86px;
  height: 86px;
  overflow: visible;
  filter: drop-shadow(0 2px 2px rgba(0, 0, 0, 0.3));
}
.dock-item .large {
  width: 90px;
  height: 90px;
}
.dock-item .larger {
  width: 96px;
  height: 96px;
}
.dock-item.running::after {
  content: "";
  position: absolute;
  bottom: -9px;
  width: 8px;
  height: 8px;
  border-radius: 50%;
  background-color: #000;
}
.badge {
  position: absolute;
  top: 6px;
  right: 0;
  display: grid;
  place-items: center;
  width: 42px;
  height: 42px;
  border-radius: 50%;
  background-color: #e65142;
}
.badge::after {
  content: "";
  width: 4px;
  height: 4px;
  border-radius: 50%;
  background-color: #fff;
}
.dock-divider {
  width: 2px;
  height: 100px;
  margin: 0 26px;
  background-color: #555;
}
```
